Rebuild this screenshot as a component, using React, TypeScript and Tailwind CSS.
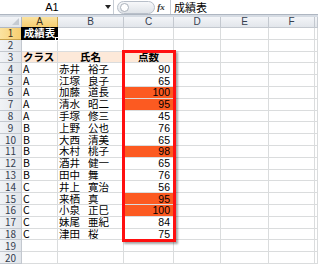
import React from "react"

type Row = { cls: string; sei: string; mei: string; score: number; hot?: boolean }

const data: Row[] = [
    { cls: "A", sei: "赤井", mei: "裕子", score: 90 },
    { cls: "A", sei: "江塚", mei: "良子", score: 65 },
    { cls: "A", sei: "加藤", mei: "道長", score: 100, hot: true },
    { cls: "A", sei: "清水", mei: "昭二", score: 95, hot: true },
    { cls: "A", sei: "手塚", mei: "修三", score: 45 },
    { cls: "B", sei: "上野", mei: "公也", score: 76 },
    { cls: "B", sei: "大西", mei: "清美", score: 65 },
    { cls: "B", sei: "木村", mei: "桃子", score: 98, hot: true },
    { cls: "B", sei: "酒井", mei: "健一", score: 65 },
    { cls: "B", sei: "田中", mei: "舞", score: 76 },
    { cls: "C", sei: "井上", mei: "寛治", score: 56 },
    { cls: "C", sei: "来栖", mei: "真", score: 95, hot: true },
    { cls: "C", sei: "小泉", mei: "正巳", score: 100, hot: true },
    { cls: "C", sei: "妹尾", mei: "亜紀", score: 84 },
    { cls: "C", sei: "津田", mei: "桜", score: 75 },
]

const cols = ["A", "B", "C", "D", "E", "F", ""]
const cell = "border-r border-b border-[#dadcdd] whitespace-nowrap leading-[10px] flex items-center"
const rowHead = "border-r border-b border-[#c3c8cf] bg-gradient-to-r from-[#f1f3f6] to-[#e2e6eb] text-[#35404f] text-[10px] flex items-center justify-center leading-[10px]"

function Blank({ n }: { n: number }) {
    return <>{Array.from({ length: n }).map((_, i) => <div key={i} className={cell}></div>)}</>
}

export default function App() {
    return (
        <div className="w-[318px] h-[266px] overflow-hidden bg-white text-black" style={{ fontFamily: '"Noto Sans CJK JP", "Liberation Sans", sans-serif' }}>
            {/* formula bar */}
            <div className="flex h-[15px] items-center border-b border-[#aeb6c1] bg-white">
                <div className="relative w-[114px] h-full border-r border-[#c6ccd4] flex items-center">
                    <span className="w-[104px] text-center text-[11px] leading-none" style={{ fontFamily: '"Liberation Sans", sans-serif' }}>A1</span>
                    <span className="absolute right-[2px] top-[5px] w-0 h-0 border-l-[3px] border-r-[3px] border-t-[4px] border-l-transparent border-r-transparent border-t-[#222]"></span>
                </div>
                <div className="ml-[3px] w-[38px] h-[13px] rounded-full border border-[#b8bfc9] bg-gradient-to-b from-[#f7f8fa] to-[#dfe3e8] flex items-center pl-[2px]">
                    <span className="w-[9px] h-[9px] rounded-full border border-[#aab1bb] bg-white"></span>
                </div>
                <span className="w-[12px] text-center text-[9px] italic font-bold leading-none text-[#333]" style={{ fontFamily: '"Liberation Serif", serif' }}>fx</span>
                <span className="h-full border-l border-[#c6ccd4] ml-[3px]"></span>
                <span className="ml-[3px] text-[11px] leading-none">成績表</span>
            </div>
            <div className="h-[2px] bg-[#d5dbe3]"></div>

            {/* sheet */}
            <div className="relative grid grid-cols-[22px_36px_66px_50px_47px_48px_46px_1fr] grid-rows-[11px] auto-rows-[11.8px]">
                {/* header row */}
                <div className="relative border-r border-b border-[#b1b8c2] bg-gradient-to-b from-[#f3f5f8] to-[#e2e6eb]">
                    <span className="absolute right-[2px] bottom-[2px] w-0 h-0" style={{ borderBottom: "7px solid #c5cbd3", borderLeft: "7px solid transparent" }}></span>
                </div>
                {cols.map((c, i) => (
                    <div key={i} className={`border-r border-b flex items-center justify-center text-[10px] leading-none ${c === "A" ? "bg-gradient-to-b from-[#fbe3a0] to-[#f7cd6e] border-[#c9a24a] text-[#3a3020]" : "bg-gradient-to-b from-[#f3f5f8] to-[#e2e6eb] border-[#c3c8cf] text-[#35404f]"}`} style={{ fontFamily: '"Liberation Sans", sans-serif' }}>{c}</div>
                ))}

                {/* row 1 */}
                <div className="border-r border-b border-[#c9a24a] bg-gradient-to-r from-[#fbe3a0] to-[#f7cd6e] text-[#3a3020] text-[10px] flex items-center justify-center leading-[10px]">1</div>
                <div className="relative border-r border-b border-[#dadcdd]">
                    <div className="absolute -left-[1px] -top-[1px] h-[12.8px] w-[37px] border-2 border-black bg-black flex items-center justify-center">
                        <span className="text-white text-[10.5px] font-bold leading-[10px] whitespace-nowrap">成績表</span>
                    </div>
                    <span className="absolute -right-[2px] -bottom-[2px] w-[4px] h-[4px] bg-black border border-white"></span>
                </div>
                <Blank n={6} />

                {/* row 2 */}
                <div className={rowHead}>2</div>
                <Blank n={7} />

                {/* row 3 */}
                <div className={rowHead}>3</div>
                <div className={`${cell} bg-[#fde9d9] text-[10.5px] font-bold pl-[1px]`}>クラス</div>
                <div className={`${cell} bg-[#fde9d9] text-[10.5px] font-bold justify-center`}>氏名</div>
                <div className={`${cell} bg-[#fde9d9] text-[10.5px] font-bold justify-center`}>点数</div>
                <Blank n={4} />

                {data.map((r, i) => (
                    <React.Fragment key={i}>
                        <div className={rowHead}>{i + 4}</div>
                        <div className={`${cell} text-[10.5px] pl-[1px]`}>{r.cls}</div>
                        <div className={`${cell} text-[10.5px] pl-[1px] gap-[6px]`}>
                            <span className="w-[23px]">{r.sei}</span>
                            <span>{r.mei}</span>
                        </div>
                        <div className={`${cell} text-[10.5px] justify-end pr-[3px] ${r.hot ? "bg-[#fc5a21]" : ""}`} style={{ fontFamily: '"Liberation Sans", sans-serif' }}>{r.score}</div>
                        <Blank n={4} />
                    </React.Fragment>
                ))}

                {[19, 20].map(n => (
                    <React.Fragment key={n}>
                        <div className={rowHead}>{n}</div>
                        <Blank n={7} />
                    </React.Fragment>
                ))}

                {/* red frame over C3:C18 */}
                <div className="absolute left-[122px] top-[33px] w-[54px] h-[192px] border-[3px] border-[#ff1010] shadow-[2px_2px_2px_rgba(0,0,0,0.35)] pointer-events-none"></div>
            </div>
        </div>
    )
}
